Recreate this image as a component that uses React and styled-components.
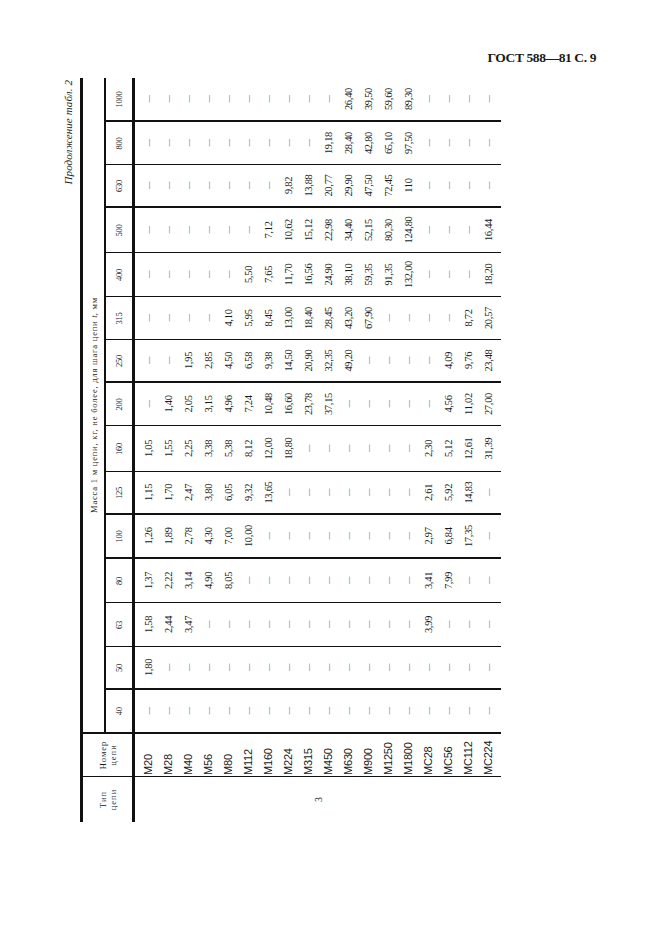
import React from 'react';
import styled, { createGlobalStyle } from 'styled-components';

const D = '-';

const steps = ['40', '50', '63', '80', '100', '125', '160', '200', '250', '315', '400', '500', '630', '800', '1000'];
const widths = [44, 43, 44, 44, 44, 43, 46, 43, 43, 43, 44, 45, 43, 43, 44];
const rules = [2.5, 2, 1, 1, 2, 2, 1, 1, 2, 1, 1, 1, 2, 1, 2];

const chains = ['М20', 'М28', 'М40', 'М56', 'М80', 'М112', 'М160', 'М224', 'М315', 'М450',
  'М630', 'М900', 'М1250', 'М1800', 'МС28', 'МС56', 'МС112', 'МС224'];

const masses = [
  '- - - - - - - - - - - - - - - - - -',
  '1,80 - - - - - - - - - - - - - - - - -',
  '1,58 2,44 3,47 - - - - - - - - - - - 3,99 - - -',
  '1,37 2,22 3,14 4,90 8,05 - - - - - - - - - 3,41 7,99 - -',
  '1,26 1,89 2,78 4,30 7,00 10,00 - - - - - - - - 2,97 6,84 17,35 -',
  '1,15 1,70 2,47 3,80 6,05 9,32 13,65 - - - - - - - 2,61 5,92 14,83 -',
  '1,05 1,55 2,25 3,38 5,38 8,12 12,00 18,80 - - - - - - 2,30 5,12 12,61 31,39',
  '- 1,40 2,05 3,15 4,96 7,24 10,48 16,60 23,78 37,15 - - - - - 4,56 11,02 27,00',
  '- - 1,95 2,85 4,50 6,58 9,38 14,50 20,90 32,35 49,20 - - - - 4,09 9,76 23,48',
  '- - - - 4,10 5,95 8,45 13,00 18,40 28,45 43,20 67,90 - - - - 8,72 20,57',
  '- - - - - 5,50 7,65 11,70 16,56 24,90 38,10 59,35 91,35 132,00 - - - 18,20',
  '- - - - - - 7,12 10,62 15,12 22,98 34,40 52,15 80,30 124,80 - - - 16,44',
  '- - - - - - - 9,82 13,88 20,77 29,90 47,50 72,45 110 - - - -',
  '- - - - - - - - - 19,18 28,40 42,80 65,10 97,50 - - - -',
  '- - - - - - - - - - 26,40 39,50 59,60 89,30 - - - -',
].map(s => s.split(' '));

const GlobalStyle = createGlobalStyle`
  body {
    margin: 0;
    background: #fff;
  }
`;

const Page = styled.div`
  width: 661px;
  height: 936px;
  background: #fff;
  display: flex;
  flex-direction: column;
  color: #1a1a1a;
  font-family: "Liberation Serif", "Times New Roman", serif;
`;

const RunningHead = styled.div`
  align-self: flex-end;
  padding: 50px 65px 0 0;
  font-weight: bold;
  font-size: 13.5px;
  line-height: 16px;
  letter-spacing: -0.4px;
`;

// box holding the sheet turned a quarter to the left
const Stage = styled.div`
  margin: 12px 0 0 58px;
  width: 443px;
  height: 744px;
`;

const Sheet = styled.div`
  width: 744px;
  height: 443px;
  transform-origin: 0 0;
  transform: translateY(744px) rotate(-90deg);
  display: flex;
  flex-direction: column;
`;

const Caption = styled.div`
  height: 23px;
  box-sizing: border-box;
  padding: 3px 2px 0 0;
  text-align: right;
  font-style: italic;
  font-size: 11px;
  line-height: 14px;
  letter-spacing: 0.1px;
`;

const Table = styled.div`
  border-top: 3px solid #111;
  display: flex;
  flex-direction: column;
`;

const Head = styled.div`
  display: flex;
  height: 52px;
  box-sizing: border-box;
  border-bottom: 3px solid #111;
`;

const HeadCell = styled.div`
  width: ${p => p.$w}px;
  box-sizing: border-box;
  border-left: ${p => p.$rule || 0}px solid #111;
  display: flex;
  align-items: center;
  justify-content: center;
  text-align: center;
  font-size: 8.5px;
  line-height: 10px;
  letter-spacing: 1px;
`;

const MassGroup = styled.div`
  flex: 1;
  display: flex;
  flex-direction: column;
  border-left: ${rules[0]}px solid #111;
`;

const MassTitle = styled.div`
  height: 23px;
  box-sizing: border-box;
  border-bottom: 2px solid #111;
  display: flex;
  align-items: center;
  justify-content: center;
  font-size: 8.5px;
  letter-spacing: 0.8px;

  i {
    letter-spacing: 0;
  }
`;

const StepRow = styled.div`
  flex: 1;
  display: flex;
`;

const StepCell = styled.div`
  width: ${p => p.$w}px;
  box-sizing: border-box;
  border-left: ${p => p.$rule}px solid #111;
  display: flex;
  align-items: center;
  justify-content: center;
  font-size: 8.5px;
  letter-spacing: -0.3px;
`;

const Body = styled.div`
  display: flex;
  height: 366px;
`;

const Column = styled.div`
  width: ${p => p.$w}px;
  box-sizing: border-box;
  border-left: ${p => p.$rule || 0}px solid #111;
  padding-top: 3px;
  display: flex;
  flex-direction: column;
`;

const TypeColumn = styled(Column)`
  padding-top: 0;
  align-items: center;
  justify-content: center;
  font-size: 10px;
`;

const Cell = styled.div`
  height: 20px;
  display: flex;
  align-items: center;
  justify-content: center;
  font-size: 10.5px;
  letter-spacing: -0.3px;
`;

const LabelCell = styled(Cell)`
  justify-content: flex-start;
  padding-left: 1px;
  font-family: "Liberation Sans", Arial, sans-serif;
  font-size: 11px;
  letter-spacing: -0.2px;
`;

const Dash = styled.span`
  font-size: 7.5px;
  color: #555;
`;

const App = () => (
  <Page>
    <GlobalStyle />
    <RunningHead>ГОСТ 588—81 С. 9</RunningHead>
    <Stage>
      <Sheet>
        <Caption>Продолжение табл. 2</Caption>
        <Table>
          <Head>
            <HeadCell $w={45}>Тип<br />цепи</HeadCell>
            <HeadCell $w={43} $rule={1}>Номер<br />цепи</HeadCell>
            <MassGroup>
              <MassTitle>
                Масса 1 м цепи, кг, не более, для шага цепи&nbsp;<i>t</i>, мм
              </MassTitle>
              <StepRow>
                {steps.map((s, i) => (
                  <StepCell
                    key={s}
                    $w={i === 0 ? widths[0] - rules[0] : widths[i]}
                    $rule={i === 0 ? 0 : rules[i]}
                  >
                    {s}
                  </StepCell>
                ))}
              </StepRow>
            </MassGroup>
          </Head>
          <Body>
            <TypeColumn $w={45}>3</TypeColumn>
            <Column $w={43} $rule={1}>
              {chains.map(c => <LabelCell key={c}>{c}</LabelCell>)}
            </Column>
            {masses.map((col, i) => (
              <Column key={steps[i]} $w={widths[i]} $rule={rules[i]}>
                {col.map((v, j) => (
                  <Cell key={j}>{v === D ? <Dash>—</Dash> : v}</Cell>
                ))}
              </Column>
            ))}
          </Body>
        </Table>
      </Sheet>
    </Stage>
  </Page>
);

export default App;
